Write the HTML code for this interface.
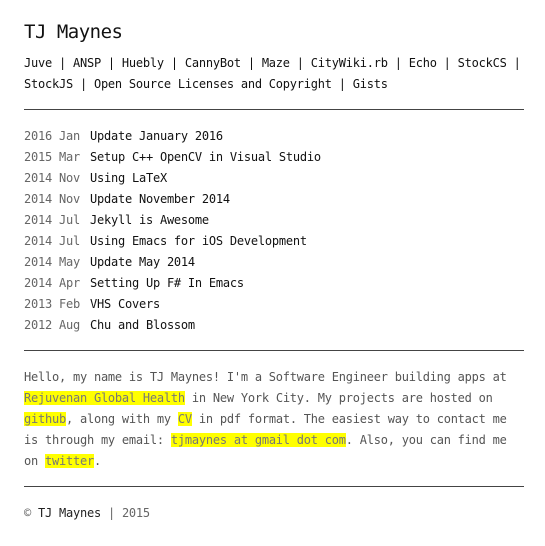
<!DOCTYPE html>
<html><head><meta charset="utf-8"><style>
body{margin:0;background:#fff;font-family:"DejaVu Sans Mono","Liberation Mono",monospace;font-size:12px;letter-spacing:-0.23px;line-height:21px;color:#111;}
.w{position:absolute;left:24px;top:0;width:500px;}
h1{font-size:19px;letter-spacing:-0.5px;font-weight:normal;margin:0;position:absolute;top:21px;line-height:22px;}
.nav{position:absolute;top:53px;width:520px;}
hr{border:0;border-top:1px solid #444;margin:0;position:absolute;left:0;width:500px;}
.list{position:absolute;top:126px;width:520px;}
.d{display:inline-block;width:66px;color:#666;}
.p{position:absolute;top:367px;color:#555;width:520px;}
.h{background:#ff0;color:#777;}
.f{position:absolute;top:503px;color:#222;}
</style></head><body><div class="w">
<h1>TJ Maynes</h1>
<div class="nav">Juve | ANSP | Huebly | CannyBot | Maze | CityWiki.rb | Echo | StockCS |<br>StockJS | Open Source Licenses and Copyright | Gists</div>
<hr style="top:109px">
<div class="list">
<div><span class="d">2016 Jan</span>Update January 2016</div>
<div><span class="d">2015 Mar</span>Setup C++ OpenCV in Visual Studio</div>
<div><span class="d">2014 Nov</span>Using LaTeX</div>
<div><span class="d">2014 Nov</span>Update November 2014</div>
<div><span class="d">2014 Jul</span>Jekyll is Awesome</div>
<div><span class="d">2014 Jul</span>Using Emacs for iOS Development</div>
<div><span class="d">2014 May</span>Update May 2014</div>
<div><span class="d">2014 Apr</span>Setting Up F# In Emacs</div>
<div><span class="d">2013 Feb</span>VHS Covers</div>
<div><span class="d">2012 Aug</span>Chu and Blossom</div>
</div>
<hr style="top:350px">
<div class="p">Hello, my name is TJ Maynes! I'm a Software Engineer building apps at<br><span class="h">Rejuvenan Global Health</span> in New York City. My projects are hosted on<br><span class="h">github</span>, along with my <span class="h">CV</span> in pdf format. The easiest way to contact me<br>is through my email: <span class="h">tjmaynes at gmail dot com</span>. Also, you can find me<br>on <span class="h">twitter</span>.</div>
<hr style="top:486px">
<div class="f"><span style="color:#666">©</span> TJ Maynes <span style="color:#666">| 2015</span></div>
</div></body></html>
